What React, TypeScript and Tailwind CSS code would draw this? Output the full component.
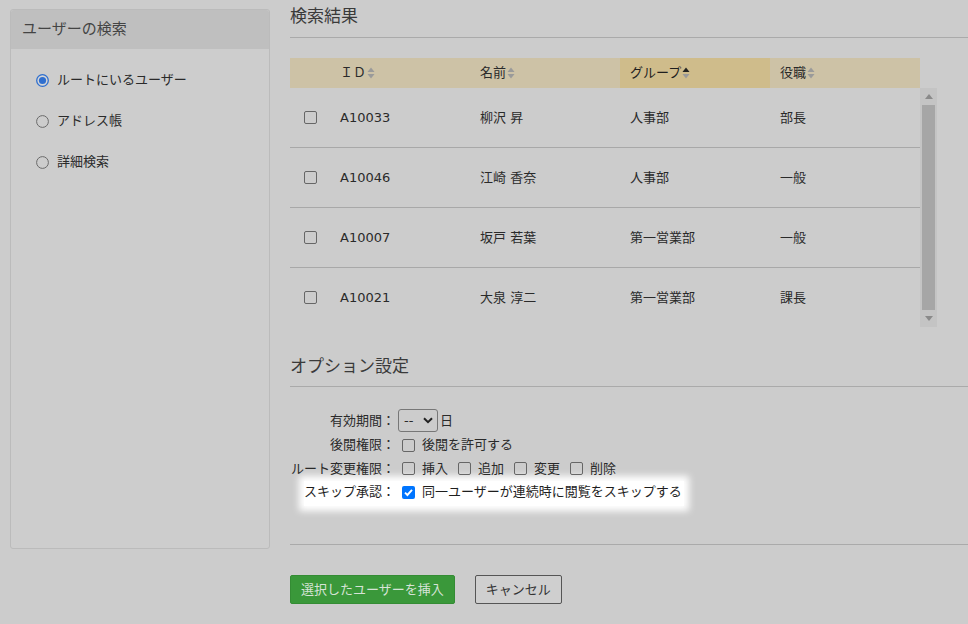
import React from 'react';

const font = "font-['DejaVu_Sans','Noto_Sans_CJK_JP',sans-serif]";

function SortIcon({ active = false }: { active?: boolean }) {
  return (
    <svg width="8" height="12" viewBox="0 0 8 12" className="ml-[1px]">
      <path d="M4 0.5 L7.5 5 L0.5 5 Z" fill={active ? '#222' : '#9a9a9a'} />
      <path d="M4 11.5 L7.5 7 L0.5 7 Z" fill="#9a9a9a" />
    </svg>
  );
}

function Box() {
  return <span className="inline-block w-[13px] h-[13px] rounded-[2px] border border-[#666] shrink-0" />;
}

function Radio({ checked = false }: { checked?: boolean }) {
  return (
    <svg width="13" height="13" viewBox="0 0 13 13" className="shrink-0">
      {checked ? (
        <>
          <circle cx="6.5" cy="6.5" r="5.8" fill="#d6d6d6" stroke="#2f6fcf" strokeWidth="1.3" />
          <circle cx="6.5" cy="6.5" r="3.6" fill="#2f6fcf" />
        </>
      ) : (
        <circle cx="6.5" cy="6.5" r="5.9" fill="none" stroke="#6a6a6a" strokeWidth="1" />
      )}
    </svg>
  );
}

const rows = [
  { id: 'A10033', name: '柳沢 昇', group: '人事部', role: '部長' },
  { id: 'A10046', name: '江崎 香奈', group: '人事部', role: '一般' },
  { id: 'A10007', name: '坂戸 若葉', group: '第一営業部', role: '一般' },
  { id: 'A10021', name: '大泉 淳二', group: '第一営業部', role: '課長' },
];

export default function App() {
  return (
    <div className={`w-[968px] h-[624px] bg-[#cccccc] overflow-hidden flex text-[13px] text-[#2a2a2a] ${font}`}>
      {/* left panel */}
      <div className="ml-[10px] mt-[9px] w-[260px] h-[540px] border border-[#bbbbbb] rounded-[3px] bg-[#cdcdcd] flex flex-col shrink-0">
        <div className="h-[39px] bg-[#bfbfbf] flex items-center pl-[11px] text-[15px] text-[#444] rounded-t-[3px]">
          ユーザーの検索
        </div>
        <div className="flex flex-col gap-[21px] pt-[21px] pl-[25px]">
          <div className="flex items-center h-[20px] gap-[8px]"><Radio checked /><span>ルートにいるユーザー</span></div>
          <div className="flex items-center h-[20px] gap-[8px]"><Radio /><span>アドレス帳</span></div>
          <div className="flex items-center h-[20px] gap-[8px]"><Radio /><span>詳細検索</span></div>
        </div>
      </div>

      {/* right column */}
      <div className="ml-[20px] flex-1 flex flex-col">
        <div className="h-[38px] border-b border-[#aaaaaa] pt-[4px] text-[17px] leading-[24px] text-[#3a3a3a]">検索結果</div>

        <div className="mt-[20px] w-[647px]">
          <div className="flex h-[30px] w-[630px] bg-[#cdc2a6] items-stretch">
            <div className="w-[40px]" />
            <div className="w-[140px] pl-[10px] flex items-center">ＩＤ<SortIcon /></div>
            <div className="w-[150px] pl-[10px] flex items-center">名前<SortIcon /></div>
            <div className="w-[150px] pl-[10px] flex items-center bg-[#cfbc8b] text-[#1f1f1f]">グループ<SortIcon active /></div>
            <div className="w-[150px] pl-[10px] flex items-center">役職<SortIcon /></div>
          </div>
          <div className="flex h-[239px]">
            <div className="w-[630px] overflow-hidden">
              {rows.map((r) => (
                <div key={r.id} className="flex h-[60px] items-center border-b border-[#a8a8a8]">
                  <div className="w-[40px] pl-[14px] flex items-center"><Box /></div>
                  <div className="w-[140px] pl-[10px]">{r.id}</div>
                  <div className="w-[150px] pl-[10px]">{r.name}</div>
                  <div className="w-[150px] pl-[10px]">{r.group}</div>
                  <div className="w-[150px] pl-[10px]">{r.role}</div>
                </div>
              ))}
            </div>
            <div className="w-[17px] bg-[#c4c4c4] flex flex-col items-center">
              <div className="h-[17px] flex items-center justify-center">
                <svg width="8" height="5" viewBox="0 0 8 5"><path d="M4 0 L8 5 L0 5 Z" fill="#8a8a8a" /></svg>
              </div>
              <div className="w-[13px] flex-1 bg-[#a6a6a6]" />
              <div className="h-[17px] flex items-center justify-center">
                <svg width="8" height="5" viewBox="0 0 8 5"><path d="M0 0 L8 0 L4 5 Z" fill="#8a8a8a" /></svg>
              </div>
            </div>
          </div>
        </div>

        <div className="mt-[27px] pb-[8px] border-b border-[#aaaaaa] text-[17px] leading-[24px] text-[#3a3a3a]">オプション設定</div>

        <div className="mt-[21px] flex flex-col">
          <div className="relative z-10 flex items-center h-[25px]">
            <div className="w-[105px] text-right">有効期間：</div>
            <div className="ml-[3px] w-[40px] h-[23px] border border-[#777] rounded-[3px] flex items-center justify-between pl-[5px] pr-[4px]">
              <span>--</span>
              <svg width="10" height="7" viewBox="0 0 10 7"><path d="M1 1.2 L5 5.2 L9 1.2" fill="none" stroke="#222" strokeWidth="2" /></svg>
            </div>
            <span className="ml-[2px]">日</span>
          </div>
          <div className="relative z-10 flex items-center h-[24px]">
            <div className="w-[105px] text-right">後閲権限：</div>
            <span className="ml-[7px] mr-[7px] flex"><Box /></span>
            <span>後閲を許可する</span>
          </div>
          <div className="relative z-10 flex items-center h-[23px]">
            <div className="w-[105px] text-right">ルート変更権限：</div>
            <span className="ml-[7px] mr-[7px] flex"><Box /></span>
            <span>挿入</span>
            <span className="ml-[10px] mr-[7px] flex"><Box /></span>
            <span>追加</span>
            <span className="ml-[10px] mr-[7px] flex"><Box /></span>
            <span>変更</span>
            <span className="ml-[10px] mr-[7px] flex"><Box /></span>
            <span>削除</span>
          </div>
          <div className="relative flex items-center h-[24px] text-[#1e1e1e]">
            <div className="absolute left-[14px] top-[1px] w-[380px] h-[25px] bg-white shadow-[0_0_7px_5px_#ffffff]" />
            <div className="relative w-[105px] text-right">スキップ承認：</div>
            <span className="relative ml-[7px] mr-[7px] w-[13px] h-[13px] rounded-[2px] bg-[#0075ff] flex items-center justify-center">
              <svg width="11" height="11" viewBox="0 0 11 11"><path d="M2 5.6 L4.4 8 L9 2.8" fill="none" stroke="#fff" strokeWidth="1.9" /></svg>
            </span>
            <span className="relative">同一ユーザーが連続時に閲覧をスキップする</span>
          </div>
        </div>

        <div className="mt-[40px] border-b border-[#aaaaaa]" />

        <div className="mt-[30px] flex items-center gap-[20px]">
          <button className="h-[29px] px-[10px] bg-[#3a983a] border border-[#348c34] rounded-[2px] text-[#d6e3d6] text-[13px]">選択したユーザーを挿入</button>
          <button className="h-[29px] px-[10px] bg-[#cfcfcf] border border-[#555] rounded-[2px] text-[#333] text-[13px]">キャンセル</button>
        </div>
      </div>
    </div>
  );
}
